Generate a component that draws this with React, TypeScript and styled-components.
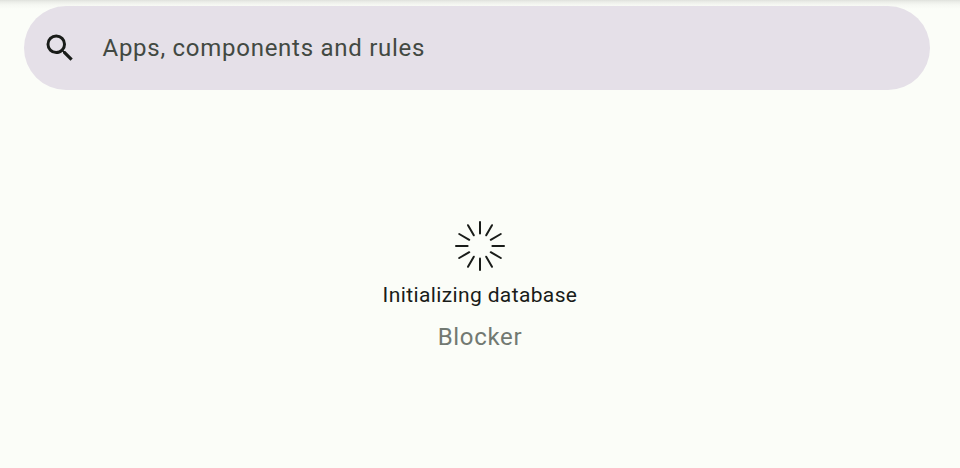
import React from "react";
import styled, { createGlobalStyle } from "styled-components";

const GlobalStyle = createGlobalStyle`
  * { box-sizing: border-box; }
  body { margin: 0; background: #fbfdf8; font-family: Roboto, sans-serif; }
`;

const Screen = styled.main`
  display: flex;
  flex-direction: column;
  height: 468px;
  padding: 6px 30px 0 24px;
  overflow: hidden;
  background: linear-gradient(#dfe1dc 0, #eceee9 2px, #f6f8f3 5px, #fbfdf8 9px);
`;

const SearchBar = styled.div`
  display: flex;
  flex: none;
  align-items: center;
  height: 84px;
  padding-left: 18px;
  border-radius: 42px;
  background: #e5e0e8;
`;

const SearchIcon = styled.svg`
  width: 36px;
  height: 36px;
  fill: #191c19;
`;

const SearchHint = styled.span`
  margin-left: 24.5px;
  color: #424942;
  font-size: 24px;
  line-height: 36px;
  letter-spacing: 0.73px;
  white-space: nowrap;
`;

const Loading = styled.section`
  display: flex;
  flex-direction: column;
  align-items: center;
  margin-right: -6px;
  padding-top: 128px;
`;

const Spinner = styled.svg`
  width: 56px;
  height: 56px;
  stroke: #191c19;
  stroke-width: 2;
  stroke-linecap: round;
`;

const Status = styled.div`
  margin-top: 6px;
  color: #191c19;
  font-size: 21px;
  line-height: 30px;
  letter-spacing: 0.375px;
`;

const AppName = styled.div`
  margin-top: 9px;
  color: #727972;
  font-size: 24px;
  line-height: 36px;
  letter-spacing: 0.7px;
`;

export default function App() {
  return (
    <>
      <GlobalStyle />
      <Screen>
        <SearchBar>
          <SearchIcon viewBox="0 0 24 24">
            <path d="M15.5 14h-.79l-.28-.27A6.47 6.47 0 0 0 16 9.5 6.5 6.5 0 1 0 9.5 16c1.61 0 3.09-.59 4.23-1.57l.27.28v.79l5 4.99L20.49 19l-4.99-5zm-6 0C7.01 14 5 11.99 5 9.5S7.01 5 9.5 5 14 7.01 14 9.5 11.99 14 9.5 14z" />
          </SearchIcon>
          <SearchHint>Apps, components and rules</SearchHint>
        </SearchBar>
        <Loading>
          <Spinner viewBox="-28 -28 56 56">
            {Array.from({ length: 12 }, (_, i) => (
              <line key={i} y1={-24} y2={-12.4} transform={`rotate(${i * 30})`} />
            ))}
          </Spinner>
          <Status>Initializing database</Status>
          <AppName>Blocker</AppName>
        </Loading>
      </Screen>
    </>
  );
}
